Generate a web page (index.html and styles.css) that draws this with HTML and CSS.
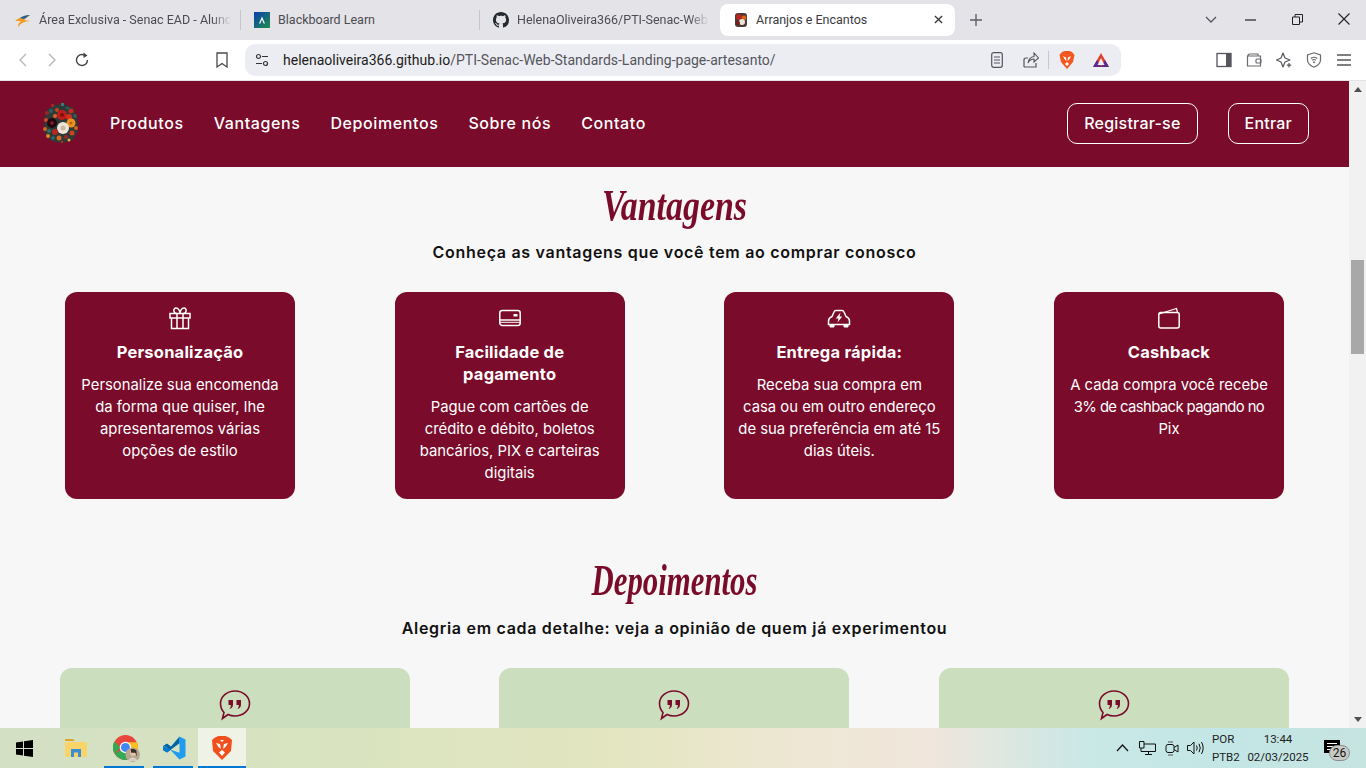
FILE: index.html
```html
<!DOCTYPE html>
<html lang="pt-BR">
<head>
  <meta charset="UTF-8" />
  <title>Arranjos e Encantos</title>
  <link rel="stylesheet" href="styles.css">
</head>
<body>

<div class="tabbar">
  <div class="tab">
    <svg class="fav" viewBox="0 0 16 16"><path d="M0 9 Q6 4 15 3 L9 8 L15 9 Q7 9 3 15 Q3 11 6 9 Z" fill="#f39a1f"/><path d="M5 6 Q9 3 15 3 L9 7 Z" fill="#1f5f9e"/></svg>
    <span class="tab-name clip">Área Exclusiva - Senac EAD - Aluno</span>
  </div>
  <div class="tab-sep"></div>
  <div class="tab tab-bb">
    <svg class="fav" viewBox="0 0 16 16"><defs><linearGradient id="bb" x1="0" y1="0" x2="1" y2="1"><stop offset="0" stop-color="#0a3fb0"/><stop offset="1" stop-color="#1f8f4a"/></linearGradient></defs><rect width="16" height="16" fill="url(#bb)"/><path d="M5 11.5 L8 4.5 L11 11.5 L9.6 11.5 L8 7.5 L6.4 11.5 Z" fill="#fff"/></svg>
    <span class="tab-name">Blackboard Learn</span>
  </div>
  <div class="tab-sep"></div>
  <div class="tab tab-gh">
    <svg class="fav" viewBox="0 0 16 16"><path fill="#24292f" d="M8 0C3.58 0 0 3.58 0 8c0 3.54 2.29 6.53 5.47 7.59.4.07.55-.17.55-.38 0-.19-.01-.82-.01-1.49-2.01.37-2.53-.49-2.69-.94-.09-.23-.48-.94-.82-1.13-.28-.15-.68-.52-.01-.53.63-.01 1.08.58 1.23.82.72 1.21 1.87.87 2.33.66.07-.52.28-.87.51-1.07-1.78-.2-3.64-.89-3.64-3.95 0-.87.31-1.59.82-2.15-.08-.2-.36-1.02.08-2.12 0 0 .67-.21 2.2.82.64-.18 1.32-.27 2-.27s1.36.09 2 .27c1.53-1.04 2.2-.82 2.2-.82.44 1.1.16 1.92.08 2.12.51.56.82 1.27.82 2.15 0 3.07-1.87 3.75-3.65 3.95.29.25.54.73.54 1.48 0 1.07-.01 1.93-.01 2.2 0 .21.15.46.55.38A8 8 0 0 0 16 8c0-4.42-3.58-8-8-8z"/></svg>
    <span class="tab-name clip">HelenaOliveira366/PTI-Senac-Web-</span>
  </div>
  <div class="tab tab-active">
    <svg class="fav" viewBox="0 0 16 16"><rect x="2" y="1" width="12" height="14" rx="3" fill="#4a3a38"/><circle cx="6" cy="5" r="3" fill="#b8261f"/><circle cx="11" cy="6" r="2.4" fill="#d8621c"/><circle cx="9" cy="10" r="3" fill="#ece4d6"/><circle cx="5" cy="11" r="2" fill="#7d1a1a"/></svg>
    <span class="tab-name">Arranjos e Encantos</span>
    <svg class="tab-x" viewBox="0 0 10 10"><path d="M1 1 L9 9 M9 1 L1 9" stroke="#3a3a3a" stroke-width="1.5"/></svg>
  </div>
  <svg class="tab-plus" viewBox="0 0 12 12"><path d="M6 0 V12 M0 6 H12" stroke="#5f5f66" stroke-width="1.4"/></svg>
  <div class="win-btns">
    <svg class="win-chev" viewBox="0 0 12 8"><path d="M1 1 L6 6 L11 1" fill="none" stroke="#55555c" stroke-width="1.3"/></svg>
    <svg class="win-min" viewBox="0 0 11 2"><path d="M0 1 H11" stroke="#222" stroke-width="1.2"/></svg>
    <svg class="win-max" viewBox="0 0 11 11"><path d="M.5 3 H7.5 V10.5 H.5 Z M3 3 V.5 H10.5 V8 H7.5" fill="none" stroke="#222"/></svg>
    <svg class="win-close" viewBox="0 0 12 12"><path d="M.5 .5 L11.5 11.5 M11.5 .5 L.5 11.5" stroke="#222" stroke-width="1.1"/></svg>
  </div>
</div>

<div class="toolbar">
  <svg class="nav-ic nav-back" viewBox="0 0 9 14"><path d="M8 1 L2 7 L8 13" fill="none" stroke="#b4b4ba" stroke-width="1.3"/></svg>
  <svg class="nav-ic nav-fwd" viewBox="0 0 9 14"><path d="M1 1 L7 7 L1 13" fill="none" stroke="#b4b4ba" stroke-width="1.3"/></svg>
  <svg class="nav-reload" viewBox="0 0 16 16"><path d="M13.5 8 A5.5 5.5 0 1 1 10.5 3.1" fill="none" stroke="#444" stroke-width="1.4"/><path d="M9.5 .5 L13.5 3.5 L9.5 6 Z" fill="#444"/></svg>
  <svg class="nav-mark" viewBox="0 0 12 16"><path d="M1 1 H11 V15 L6 11.5 L1 15 Z" fill="none" stroke="#4a4a50" stroke-width="1.3"/></svg>
  <div class="urlbar">
    <svg class="url-tune" viewBox="0 0 14 14"><circle cx="3.5" cy="3.5" r="2" fill="none" stroke="#333" stroke-width="1.2"/><path d="M7 3.5 H13 M1 10.5 H7" stroke="#333" stroke-width="1.2"/><circle cx="10.5" cy="10.5" r="2" fill="none" stroke="#333" stroke-width="1.2"/></svg>
    <span class="url-text"><b>helenaoliveira366.github.io</b>/PTI-Senac-Web-Standards-Landing-page-artesanto/</span>
    <div class="url-tools">
      <svg class="url-read" viewBox="0 0 12 16"><rect x=".7" y=".7" width="10.6" height="14.6" rx="2" fill="none" stroke="#55555c" stroke-width="1.2"/><path d="M3 5 H9 M3 8 H9 M3 11 H9" stroke="#55555c" stroke-width="1.2"/></svg>
      <svg class="url-share" viewBox="0 0 16 16"><path d="M1 15 V8 Q1 6 3 6 H5 M1 15 H13 V11" fill="none" stroke="#55555c" stroke-width="1.2"/><path d="M5 11 Q6 5 11 4.500 V1 L15.500 6 L11 10 V7 Q7 7 5 11 Z" fill="none" stroke="#55555c" stroke-width="1.100"/></svg>
      <div class="url-sep"></div>
      <svg class="url-brave" viewBox="0 0 16 18"><path d="M3 1 L5.500 0 H10.500 L13 1 L15.500 4 L14 11 L8 18 L2 11 L.5 4 Z" fill="#f1571f"/><path d="M4 5 L7 6.500 L7.500 10 L5.500 8 Z M12 5 L9 6.500 L8.500 10 L10.500 8 Z M8 11 L10 13 L8 15 L6 13 Z" fill="#fff"/></svg>
      <svg class="url-tri" viewBox="0 0 18 16"><path d="M9 1 L17 15 H1 Z" fill="#e0402f"/><path d="M1 15 L5 8 L9 15 Z M17 15 L13 8 L9 15 Z" fill="#5a2a8c"/><path d="M9 6 L12.500 13 H5.500 Z" fill="#ecedf2"/></svg>
    </div>
  </div>
  <div class="ext-icons">
    <svg class="ext-ic" viewBox="0 0 16 16"><rect x="1" y="1.500" width="14" height="13" fill="none" stroke="#55555c" stroke-width="1.300"/><rect x="10" y="1.500" width="5" height="13" fill="#55555c"/></svg>
    <svg class="ext-ic" viewBox="0 0 16 16"><path d="M2 4 Q2 2 4 2 H12 V4 M1.500 4 H14.500 V14 H1.500 Z" fill="none" stroke="#6a6a70" stroke-width="1.200"/><rect x="10" y="7" width="5" height="4" rx="1" fill="none" stroke="#6a6a70" stroke-width="1.200"/></svg>
    <svg class="ext-ic" viewBox="0 0 16 16"><path d="M7 1 L9 6 L14 8 L9 10 L7 15 L5 10 L0.500 8 L5 6 Z" fill="none" stroke="#55555c" stroke-width="1.200" stroke-linejoin="round"/><path d="M13 11 V15.500 M10.800 13.200 H15.200" stroke="#55555c" stroke-width="1.200"/></svg>
    <svg class="ext-ic" viewBox="0 0 16 16"><path d="M8 .8 L14.500 3 V8 Q14.500 12.500 8 15.200 Q1.500 12.500 1.500 8 V3 Z" fill="none" stroke="#6a6a70" stroke-width="1.200"/><path d="M4.800 6.500 Q8 4 11.200 6.500 M6 8.300 Q8 6.800 10 8.300" fill="none" stroke="#6a6a70" stroke-width="1.100"/><circle cx="8" cy="10.200" r="1" fill="#6a6a70"/></svg>
    <svg class="ext-ic" viewBox="0 0 16 16"><path d="M1 3 H15 M1 8 H15 M1 13 H15" stroke="#55555c" stroke-width="1.300"/></svg>
  </div>
</div>

<div class="viewport">
  <div class="page">
    <header class="site-head">
      <svg class="logo" viewBox="0 0 36 40">
        <path d="M6 6 L12 2 L22 1 L31 5 L35 14 L36 28 L31 37 L20 40 L9 38 L3 31 L2 16 Z" fill="#2f3a38"/>
        <rect x="9" y="1" width="3" height="3" fill="#a8202a"/><rect x="19" y="0" width="3" height="3" fill="#3d7a74"/><rect x="24" y="4" width="3" height="2" fill="#2c5f5c"/><circle cx="29" cy="8" r="2.500" fill="#c62c1e"/>
        <circle cx="5" cy="10" r="2" fill="#8e2a2a"/><circle cx="9" cy="8" r="2" fill="#2c5f5c"/><circle cx="15" cy="7" r="2" fill="#c9441e"/>
        <circle cx="4" cy="17" r="2" fill="#d6452a"/><circle cx="20" cy="12" r="5" fill="#c01d18"/><circle cx="20" cy="12" r="2" fill="#7a100e"/><circle cx="27" cy="14" r="3" fill="#d4301c"/><circle cx="33" cy="13" r="2" fill="#2c5f5c"/><circle cx="13" cy="13" r="2" fill="#e0642a"/>
        <circle cx="10" cy="20" r="5" fill="#22090d"/><circle cx="10" cy="20" r="1.800" fill="#8a2234"/><circle cx="29" cy="20" r="4.500" fill="#eb9422"/><circle cx="29" cy="20" r="1.500" fill="#c85a16"/><circle cx="34" cy="25" r="2" fill="#d8621c"/>
        <circle cx="21" cy="25" r="6" fill="#eee6d8"/><circle cx="21" cy="25" r="2.500" fill="#c9b9a2"/><circle cx="3" cy="26" r="2" fill="#d2651f"/><circle cx="7" cy="28" r="2" fill="#2f6d66"/>
        <circle cx="13" cy="29" r="3" fill="#b8281e"/><circle cx="30" cy="30" r="2.500" fill="#c9441e"/><circle cx="6" cy="33" r="2" fill="#e0852a"/><circle cx="11" cy="35" r="1.800" fill="#2f6d66"/><circle cx="17" cy="35" r="2.500" fill="#d66a24"/><circle cx="24" cy="34" r="2" fill="#9b2a22"/><circle cx="27" cy="37" r="1.500" fill="#d8b04a"/><circle cx="20" cy="39" r="1.200" fill="#b0302a"/>
      </svg>
      <nav class="site-nav">
        <a>Produtos</a>
        <a>Vantagens</a>
        <a>Depoimentos</a>
        <a>Sobre nós</a>
        <a>Contato</a>
      </nav>
      <div class="auth">
        <a class="auth-btn btn-reg">Registrar-se</a>
        <a class="auth-btn">Entrar</a>
      </div>
    </header>

    <section class="sec-vant">
      <h2 class="script-title">Vantagens</h2>
      <p class="sec-sub">Conheça as vantagens que você tem ao comprar conosco</p>
      <div class="cards">
        <div class="card">
          <svg class="card-ic" viewBox="0 0 24 24"><path d="M2 7.500 H22 V12 H2 Z M3.500 12 V22.500 H20.500 V12 M9 7.500 V22.500 M15 7.500 V22.500 M9 7.500 C5 7.500 5 2 8 2 C10.500 2 12 5 12 7.500 C12 5 13.500 2 16 2 C19 2 19 7.500 15 7.500" fill="none" stroke="#fff" stroke-width="1.500"/></svg>
          <h3>Personalização</h3>
          <p>Personalize sua encomenda<br>da forma que quiser, lhe<br>apresentaremos várias<br>opções de estilo</p>
        </div>
        <div class="card">
          <svg class="card-ic" viewBox="0 0 24 24"><rect x="1.800" y="4.500" width="20.400" height="15" rx="2.500" fill="none" stroke="#fff" stroke-width="1.500"/><path d="M2 14 H22" stroke="#fff" stroke-width="1.500"/><path d="M2 16.300 H22" stroke="#fff" stroke-width="1"/><rect x="15.500" y="8" width="4" height="2.500" fill="#fff"/></svg>
          <h3>Facilidade de pagamento</h3>
          <p>Pague com cartões de<br>crédito e débito, boletos<br>bancários, PIX e carteiras<br>digitais</p>
        </div>
        <div class="card">
          <svg class="card-ic" viewBox="0 0 24 24"><path d="M5 10.500 L7 6 Q7.500 4.500 9 4.500 H15 Q16.500 4.500 17 6 L19 10.500 Q22.500 12 22.500 15 V18.500 H1.500 V15 Q1.500 12 5 10.500 Z" fill="none" stroke="#fff" stroke-width="1.500"/><path d="M3 18.500 V21 H7 V18.500 M17 18.500 V21 H21 V18.500" fill="#fff" stroke="#fff"/><path d="M13.500 6.500 L8.800 12.500 H11.500 L10.500 16.500 L15.200 10.500 H12.500 Z" fill="#fff"/></svg>
          <h3>Entrega rápida:</h3>
          <p>Receba sua compra em<br>casa ou em outro endereço<br>de sua preferência em até 15<br>dias úteis.</p>
        </div>
        <div class="card">
          <svg class="card-ic" viewBox="0 0 24 24"><path d="M2 8 L19.500 2.500 L20.500 6.500" fill="none" stroke="#fff" stroke-width="1.300"/><rect x="1.800" y="6.500" width="20.400" height="15.500" rx="2" fill="none" stroke="#fff" stroke-width="1.500"/></svg>
          <h3>Cashback</h3>
          <p>A cada compra você recebe<br><span class="tight">3% de cashback pagando no</span><br>Pix</p>
        </div>
      </div>
    </section>

    <section class="sec-dep">
      <h2 class="script-title">Depoimentos</h2>
      <p class="sec-sub">Alegria em cada detalhe: veja a opinião de quem já experimentou</p>
      <div class="quotes">
        <div class="quote">
          <svg class="quote-ic" viewBox="0 0 32 32"><path d="M16 2 C24 2 30.500 7.500 30.500 14.500 C30.500 21.500 24 27 16 27 C13.500 27 11 26.500 9 25.500 L3.500 29.500 L5 23.500 C2.800 21 1.500 18 1.500 14.500 C1.500 7.500 8 2 16 2 Z" fill="none" stroke="#7a0b2a" stroke-width="1.600"/><path d="M9.500 11 H14 V15.500 C14 18 12.500 19.500 10.500 20 C11.500 18.800 11.800 17.800 11.800 16 H9.500 Z M17.500 11 H22 V15.500 C22 18 20.500 19.500 18.500 20 C19.500 18.800 19.800 17.800 19.800 16 H17.500 Z" fill="#7a0b2a"/></svg>
        </div>
        <div class="quote">
          <svg class="quote-ic" viewBox="0 0 32 32"><path d="M16 2 C24 2 30.500 7.500 30.500 14.500 C30.500 21.500 24 27 16 27 C13.500 27 11 26.500 9 25.500 L3.500 29.500 L5 23.500 C2.800 21 1.500 18 1.500 14.500 C1.500 7.500 8 2 16 2 Z" fill="none" stroke="#7a0b2a" stroke-width="1.600"/><path d="M9.500 11 H14 V15.500 C14 18 12.500 19.500 10.500 20 C11.500 18.800 11.800 17.800 11.800 16 H9.500 Z M17.500 11 H22 V15.500 C22 18 20.500 19.500 18.500 20 C19.500 18.800 19.800 17.800 19.800 16 H17.500 Z" fill="#7a0b2a"/></svg>
        </div>
        <div class="quote">
          <svg class="quote-ic" viewBox="0 0 32 32"><path d="M16 2 C24 2 30.500 7.500 30.500 14.500 C30.500 21.500 24 27 16 27 C13.500 27 11 26.500 9 25.500 L3.500 29.500 L5 23.500 C2.800 21 1.500 18 1.500 14.500 C1.500 7.500 8 2 16 2 Z" fill="none" stroke="#7a0b2a" stroke-width="1.600"/><path d="M9.500 11 H14 V15.500 C14 18 12.500 19.500 10.500 20 C11.500 18.800 11.800 17.800 11.800 16 H9.500 Z M17.500 11 H22 V15.500 C22 18 20.500 19.500 18.500 20 C19.500 18.800 19.800 17.800 19.800 16 H17.500 Z" fill="#7a0b2a"/></svg>
        </div>
      </div>
    </section>
  </div>
  <div class="scrollbar">
    <div class="sb-up"></div>
    <div class="sb-track"><div class="sb-thumb"></div></div>
    <div class="sb-down"></div>
  </div>
</div>

<div class="taskbar">
  <div class="task-btn task-start">
    <svg class="task-win" viewBox="0 0 17 17"><path d="M0 2.400 L7 1.400 V8 H0 Z M8 1.300 L17 0 V8 H8 Z M0 9 H7 V15.600 L0 14.600 Z M8 9 H17 V17 L8 15.700 Z" fill="#000"/></svg>
  </div>
  <div class="task-btn task-files">
    <svg class="task-ic" viewBox="0 0 24 24"><path d="M1 4 Q1 3 2 3 H9 L11 5 H1 Z" fill="#e0a526"/><rect x="1" y="6" width="22" height="15" fill="#fbd469"/><path d="M7 21 V13 H17 V21 H14 V16.500 H10 V21 Z" fill="#3a8fd6"/></svg>
  </div>
  <div class="task-btn task-chrome task-open">
    <svg class="task-ic task-big" viewBox="0 0 26 26"><circle cx="12" cy="12" r="12" fill="#e8453c"/><path d="M12 12 L1.600 18 A12 12 0 0 0 15 23.600 Z" fill="#34a853"/><path d="M1.600 18 A12 12 0 0 1 1.600 6 L7 12 Z" fill="#34a853"/><path d="M12 7 H23 A12 12 0 0 1 15 23.600 L12 12 Z" fill="#fbc116"/><circle cx="12" cy="12" r="5.500" fill="#fff"/><circle cx="12" cy="12" r="4.300" fill="#4286f5"/><circle cx="19" cy="19" r="7" fill="#b5a890"/><circle cx="19.500" cy="17" r="3" fill="#e6c4ae"/><path d="M14 25 Q19 18 24 25 Z" fill="#d8d0c8"/><path d="M17 14 Q20 12 22.500 15 L23 21 L21.500 17 L17.500 17 Z" fill="#3a2b25"/></svg>
  </div>
  <div class="task-btn task-code task-open">
    <svg class="task-ic" viewBox="0 0 24 24"><path d="M17.500 0.500 L23.500 3.500 V20.500 L17.500 23.500 L8 13.500 L17.500 16.800 V7.200 Z" fill="#1f9cf0"/><path d="M17.500 0.500 V7.200 L5 16.500 L1 14 L5.500 12 L1 10 L5 7.500 L9 10.500 Z" fill="#0065a9"/><path d="M5 16.500 L1 14 V10 L5 12 L9 13.500 Z" fill="#007acc"/></svg>
  </div>
  <div class="task-btn task-brave task-open">
    <svg class="task-ic" viewBox="0 0 22 24"><path d="M4 1.500 L7.500 0 H14.500 L18 1.500 L21 4 L20 15 L11 24 L2 15 L1 4 Z" fill="#f1501e"/><path d="M5 7 L9 8 L10 13 L7.500 11 Z M17 7 L13 8 L12 13 L14.500 11 Z M11 14 L14 16.500 L11 20 L8 16.500 Z M9 4 H13 L11 6 Z" fill="#fff"/></svg>
  </div>
  <div class="tray">
    <svg class="tray-chev" viewBox="0 0 13 8"><path d="M1 7 L6.500 1 L12 7" fill="none" stroke="#111" stroke-width="1.200"/></svg>
    <svg class="tray-net" viewBox="0 0 17 14"><path d="M.5 .5 H5 V7 H.5 Z M5 3 H16.500 V10.500 H2 V7 M9.500 10.500 V13 M6 13.500 H13" fill="none" stroke="#111"/></svg>
    <svg class="tray-meet" viewBox="0 0 14 15"><rect x="1" y="3.500" width="8" height="8" rx="2" fill="none" stroke="#111"/><path d="M9 6.500 L13 4 V11 L9 8.500" fill="none" stroke="#111"/><path d="M3 1 H8 M3 14 H8" stroke="#555"/></svg>
    <svg class="tray-vol" viewBox="0 0 17 14"><path d="M.5 4.500 H3.500 L7 1 V13 L3.500 9.500 H.5 Z" fill="none" stroke="#111"/><path d="M9.500 4.500 Q11 7 9.500 9.500 M12 2.800 Q14.500 7 12 11.200 M14.500 1 Q17.800 7 14.500 13" fill="none" stroke="#111"/></svg>
    <div class="tray-lang"><span>POR</span><span>PTB2</span></div>
    <div class="tray-clock"><span>13:44</span><span>02/03/2025</span></div>
    <div class="tray-note">
      <svg class="note-ic" viewBox="0 0 16 14"><path d="M0 0 H16 V13 H0 Z" fill="#000"/><path d="M3 3.500 H13 M3 6.500 H13 M3 9.500 H10" stroke="#fff"/></svg>
      <span class="note-badge">26</span>
    </div>
  </div>
</div>

</body>
</html>
```

FILE: styles.css
```css
* { box-sizing: border-box; }
html, body { margin: 0; height: 100%; }
body { width: 1366px; height: 768px; overflow: hidden; display: flex; flex-direction: column; font-family: "Inter", "Liberation Sans", sans-serif; background: #f7f7f7; }

/* browser chrome */
.tabbar { height: 40px; background: #e3e3e8; display: flex; align-items: center; padding: 0 0 1px 15px; font-family: "Roboto", "Liberation Sans", sans-serif; font-size: 12.500px; color: #4b4b52; flex: none; }
.tab { display: flex; align-items: center; gap: 8px; width: 225px; }
.fav { width: 16px; height: 16px; flex: none; }
.tab-name { white-space: nowrap; }
.clip { width: 192px; -webkit-mask-image: linear-gradient(90deg, #000 90%, transparent); mask-image: linear-gradient(90deg, #000 90%, transparent); }
.tab-sep { width: 1px; height: 20px; background: #c6c6cc; margin-right: 13px; flex: none; }
.tab-bb { width: 225px; gap: 8px; }
.tab-gh { width: 227px; }
.tab-active { width: 235px; height: 32px; background: #fff; border-radius: 8px; padding: 0 12px 0 13px; gap: 7px; color: #3a3a40; }
.tab-x { width: 9px; height: 9px; margin-left: auto; }
.tab-plus { width: 12px; height: 12px; margin-left: 15px; }
.win-btns { margin-left: auto; display: flex; align-items: center; position: relative; width: 180px; height: 40px; }
.win-chev { position: absolute; left: 19px; top: 16px; width: 12px; height: 8px; }
.win-min { position: absolute; left: 59px; top: 19px; width: 11px; height: 2px; }
.win-max { position: absolute; left: 106px; top: 14px; width: 11px; height: 11px; }
.win-close { position: absolute; left: 152px; top: 13px; width: 12px; height: 12px; }

.toolbar { height: 41px; background: #fff; display: flex; align-items: center; flex: none; position: relative; padding-bottom: 1px; border-bottom: 1px solid #e3e3e8; }
.nav-ic { width: 9px; height: 14px; flex: none; }
.nav-back { margin-left: 18px; }
.nav-fwd { margin-left: 21px; }
.nav-reload { width: 16px; height: 16px; margin-left: 17px; flex: none; }
.nav-mark { width: 12px; height: 16px; margin-left: 126px; flex: none; }
.urlbar { width: 876px; height: 32px; margin-left: 17px; background: #ecedf2; border-radius: 10px; display: flex; align-items: center; padding-left: 10px; flex: none; }
.url-tune { width: 14px; height: 14px; flex: none; }
.url-text { margin-left: 14px; font-family: "Roboto", "Liberation Sans", sans-serif; font-size: 14px; color: #55555c; white-space: nowrap; }
.url-text b { font-weight: 400; color: #1c1c20; }
.url-tools { margin-left: auto; display: flex; align-items: center; padding-right: 11px; }
.url-read { width: 12px; height: 16px; }
.url-share { width: 16px; height: 16px; margin-left: 20px; }
.url-sep { width: 1px; height: 18px; background: #c6c6cc; margin-left: 9px; }
.url-brave { width: 16px; height: 18px; margin-left: 10px; }
.url-tri { width: 18px; height: 16px; margin-left: 17px; }
.ext-icons { display: flex; align-items: center; gap: 14px; margin-left: 95px; }
.ext-ic { width: 16px; height: 16px; }

/* the page */
.viewport { flex: 1; display: flex; min-height: 0; overflow: hidden; }
.page { flex: 1; min-width: 0; overflow: hidden; background: #f7f7f7; }
.site-head { height: 86px; background: #7a0b2a; display: flex; align-items: center; padding: 0 40px 2px 42px; }
.logo { width: 36px; height: 40px; flex: none; }
.site-nav { display: flex; gap: 30px; margin-left: 32px; }
.site-nav a { color: #fff; font-size: 16px; font-weight: 500; letter-spacing: .6px; }
.auth { margin-left: auto; display: flex; gap: 30px; }
.auth-btn { height: 41px; padding: 0 16px; border: 1px solid #fff; border-radius: 10px; display: flex; align-items: center; color: #fff; font-size: 16px; font-weight: 500; letter-spacing: .22px; }

.sec-vant { padding: 0 65px; }
.script-title { margin: 0; text-align: center; font-family: "Liberation Serif", serif; font-style: italic; font-weight: 700; font-size: 44px; line-height: 66px; color: #7a0b2a; transform: scaleX(.77); }
.sec-vant .script-title { padding-top: 6px; height: 71px; }
.sec-sub { margin: 0; text-align: center; font-size: 16px; font-weight: 600; letter-spacing: .7px; line-height: 28px; color: #111; }
.cards { display: flex; justify-content: space-between; align-items: stretch; margin-top: 26px; }
.card { width: 230px; height: 207px; background: #7a0b2a; border-radius: 12px; padding: 14px 15px 15px; color: #fff; text-align: center; }
.card-ic { width: 24px; height: 24px; display: block; margin: 0 auto; }
.card h3 { margin: 11px 0 0; font-size: 16.500px; font-weight: 700; letter-spacing: .2px; line-height: 22px; }
.card p { margin: 11px -10px 0; font-size: 14.850px; line-height: 22px; white-space: nowrap; }
.tight { letter-spacing: -.6px; }

.sec-dep { padding: 0 60px; margin-top: 47px; }
.sec-dep .script-title { height: 68px; padding-top: 2px; transform: scaleX(.7); }
.quotes { display: flex; gap: 89px; margin-top: 26px; }
.quote { width: 350px; height: 200px; background: #cbdebd; border-radius: 12px; padding-top: 21px; }
.quote:last-child { margin-left: auto; }
.quote-ic { width: 32px; height: 32px; display: block; margin: 0 auto; }

.scrollbar { width: 17px; background: #f1f1f1; display: flex; flex-direction: column; align-items: center; flex: none; }
.sb-up { margin-top: 6px; border: 4px solid transparent; border-top: 0; border-bottom: 5px solid #505050; }
.sb-track { flex: 1; width: 100%; padding: 168px 2px 0; }
.sb-thumb { height: 94px; background: #a8a8a8; }
.sb-down { margin-bottom: 6px; border: 4px solid transparent; border-bottom: 0; border-top: 5px solid #505050; }

/* windows taskbar */
.taskbar { height: 40px; flex: none; display: flex; align-items: stretch; font-family: "Roboto", "Liberation Sans", sans-serif; font-size: 11.500px; color: #222; background: linear-gradient(90deg, #d3e0c4 0%, #d9e3bf 25%, #e3e6c0 45%, #efe7d6 60%, #f0e6dc 68%, #c8e8e6 80%, #c3e6e6 90%, #c6e4e0 100%); }
.task-btn { display: flex; align-items: center; justify-content: center; width: 49px; flex: none; position: relative; }
.task-start { width: 48px; }
.task-win { width: 17px; height: 17px; }
.task-files { margin-left: 3px; }
.task-ic { width: 24px; height: 24px; }
.task-big { width: 27px; height: 27px; margin-left: 3px; }
.task-chrome { width: 49px; }
.task-open::after { content: ""; position: absolute; left: 4px; right: 5px; bottom: 0; height: 2px; background: #0078d4; }
.task-brave { width: 48px; background: #eef3e6; }
.task-brave.task-open::after { left: 0; right: 0; }
.tray { margin-left: auto; display: flex; align-items: center; position: relative; width: 252px; }
.tray-chev { position: absolute; left: 2px; top: 16px; width: 13px; height: 8px; }
.tray-net { position: absolute; left: 25px; top: 13px; width: 17px; height: 14px; }
.tray-meet { position: absolute; left: 51px; top: 13px; width: 14px; height: 15px; }
.tray-vol { position: absolute; left: 73px; top: 13px; width: 17px; height: 14px; }
.tray-lang { position: absolute; left: 98px; top: 2px; width: 28px; display: flex; flex-direction: column; align-items: flex-start; line-height: 18px; }
.tray-clock { position: absolute; left: 128px; top: 2px; width: 72px; display: flex; flex-direction: column; align-items: center; line-height: 18px; }
.tray-note { position: absolute; left: 210px; top: 12px; width: 30px; height: 24px; }
.note-ic { width: 16px; height: 14px; display: block; }
.note-badge { position: absolute; left: 5px; top: 5px; width: 21px; height: 16px; border-radius: 8px; border: 1px solid #8e8e8e; background: #c9c9c5; font-size: 12px; line-height: 14px; text-align: center; color: #111; }
```
